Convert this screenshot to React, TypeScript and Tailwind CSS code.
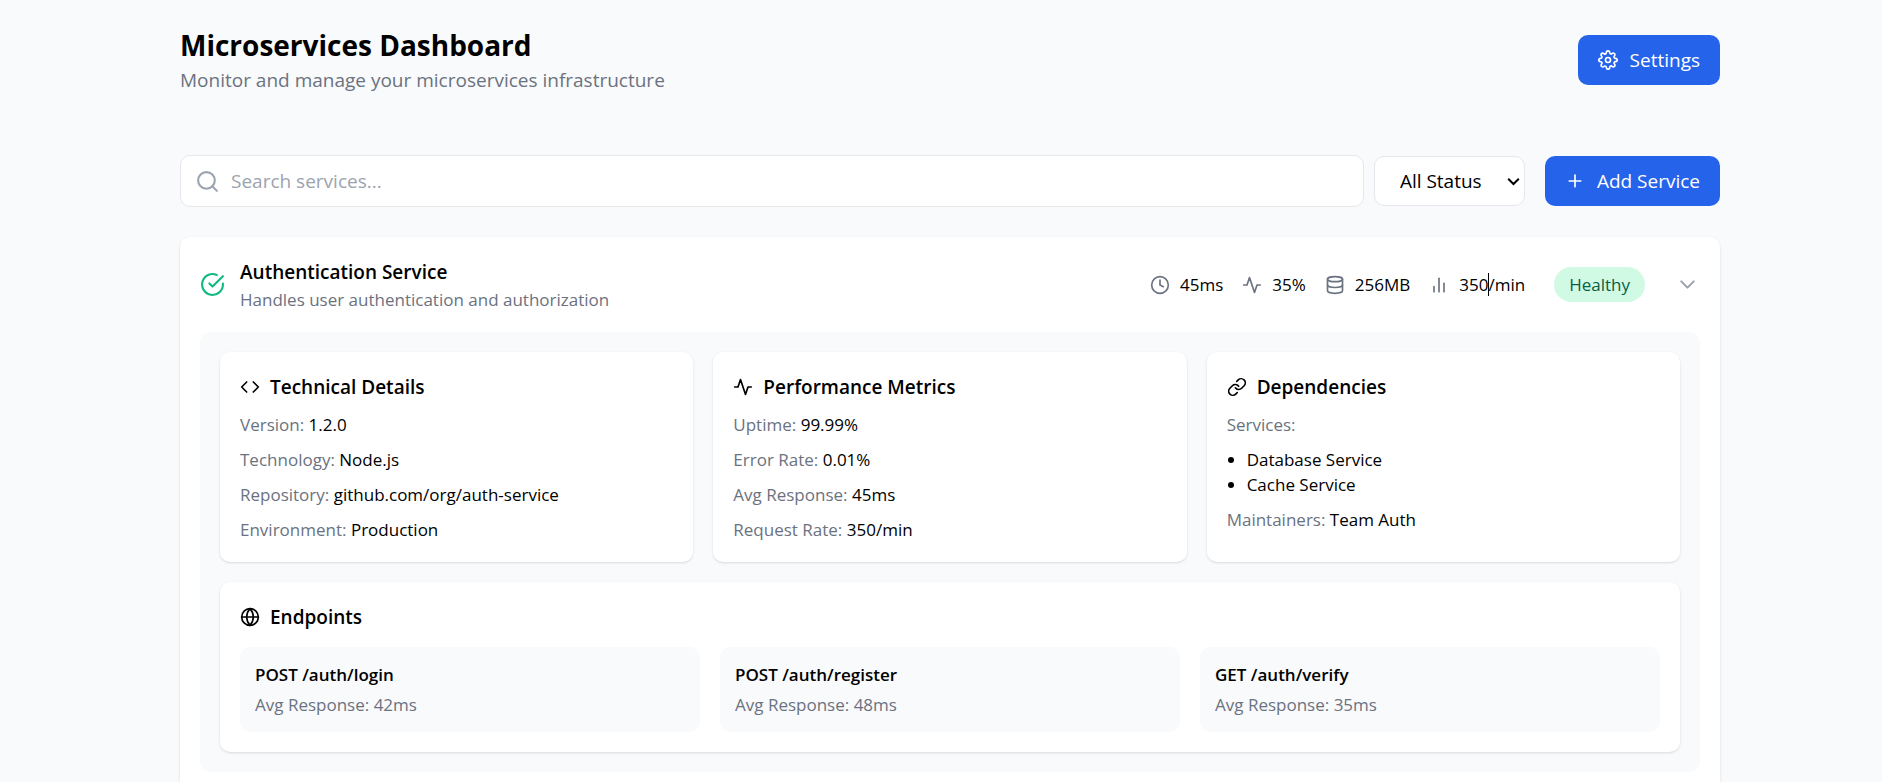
import type { ReactNode } from "react";
import {
  FiActivity,
  FiBarChart2,
  FiCheckCircle,
  FiChevronDown,
  FiClock,
  FiCode,
  FiDatabase,
  FiGlobe,
  FiLink,
  FiPlus,
  FiSearch,
  FiSettings,
} from "react-icons/fi";

const endpoints = [
  { name: "POST /auth/login", response: "42ms" },
  { name: "POST /auth/register", response: "48ms" },
  { name: "GET /auth/verify", response: "35ms" },
];

const technical: [string, string][] = [
  ["Version:", "1.2.0"],
  ["Technology:", "Node.js"],
  ["Repository:", "github.com/org/auth-service"],
  ["Environment:", "Production"],
];

const performance: [string, string][] = [
  ["Uptime:", "99.99%"],
  ["Error Rate:", "0.01%"],
  ["Avg Response:", "45ms"],
  ["Request Rate:", "350/min"],
];

function Row({ label, value }: { label: string; value?: string }) {
  return (
    <p>
      <span className="text-[#6b7280]">{label}</span> {value}
    </p>
  );
}

function Panel({ icon, title, children }: { icon: ReactNode; title: string; children: ReactNode }) {
  return (
    <section className="rounded-[10px] bg-white p-5 shadow-sm">
      <h3 className="flex items-center gap-2.5 text-[19px] leading-[30px] font-semibold">
        {icon}
        {title}
      </h3>
      {children}
    </section>
  );
}

function Metric({ icon, children }: { icon: ReactNode; children: ReactNode }) {
  return (
    <div className="flex items-center gap-2.5">
      <span className="text-[#6b7280]">{icon}</span>
      <span>{children}</span>
    </div>
  );
}

export default function App() {
  return (
    <div className="min-h-screen bg-[#f9fafb] pl-[18px] font-['Open_Sans','Noto_Sans',sans-serif] text-black">
      <div className="mx-auto max-w-[1600px] px-[30px] pt-[25px] pb-[30px]">
        <header className="mb-[60px] flex items-center justify-between">
          <div>
            <h1 className="text-[28px] leading-10 font-bold">Microservices Dashboard</h1>
            <p className="text-[19px] leading-[30px] text-[#6b7280]">
              Monitor and manage your microservices infrastructure
            </p>
          </div>
          <button
            type="button"
            className="flex h-[50px] items-center gap-3 rounded-[10px] bg-[#2563eb] px-5 text-[19px] text-white"
          >
            <FiSettings size={20} />
            Settings
          </button>
        </header>

        <div className="mb-[30px] flex items-center">
          <div className="relative grow">
            <FiSearch size={25} className="absolute top-[14px] left-[15px] text-[#9ca3af]" />
            <input
              type="text"
              aria-label="Search services"
              placeholder="Search services..."
              className="block h-[52px] w-full rounded-[10px] border border-[#e5e7eb] bg-white pr-5 pl-[50px] text-[19px] placeholder:text-[#9ca3af]"
            />
          </div>
          <div className="relative ml-2.5">
            <select
              aria-label="Status"
              className="block h-[50px] w-[151px] appearance-none rounded-[10px] border border-[#e5e7eb] bg-white pl-[25px] text-[19px]"
            >
              <option>All Status</option>
              <option>Healthy</option>
              <option>Warning</option>
              <option>Critical</option>
            </select>
            <svg
              className="pointer-events-none absolute top-[21px] right-[5px]"
              width="13"
              height="9"
              viewBox="0 0 13 9"
              fill="none"
              stroke="black"
              strokeWidth="2"
            >
              <path d="M1.2 1.7 6.5 7l5.3-5.3" />
            </svg>
          </div>
          <button
            type="button"
            className="ml-5 flex h-[50px] items-center gap-3 rounded-[10px] bg-[#2563eb] px-5 text-[19px] text-white"
          >
            <FiPlus size={20} />
            Add Service
          </button>
        </div>

        <article className="rounded-[10px] bg-white p-5 shadow-sm">
          <div className="mb-5 flex items-center justify-between">
            <div className="flex items-center gap-[15px]">
              <FiCheckCircle size={25} className="text-[#10b981]" />
              <div>
                <h2 className="text-[19px] leading-[30px] font-semibold">Authentication Service</h2>
                <p className="text-[17px] leading-[25px] text-[#6b7280]">
                  Handles user authentication and authorization
                </p>
              </div>
            </div>
            <div className="flex items-center text-[17px] leading-[25px]">
              <div className="flex items-center gap-[19px]">
                <Metric icon={<FiClock size={20} />}>45ms</Metric>
                <Metric icon={<FiActivity size={20} />}>35%</Metric>
                <Metric icon={<FiDatabase size={20} />}>256MB</Metric>
                <Metric icon={<FiBarChart2 size={20} />}>
                  350
                  <span className="relative">
                    <span className="absolute top-0 left-0 h-[23px] w-px bg-black" />
                    /min
                  </span>
                </Metric>
              </div>
              <span className="ml-[29px] rounded-full bg-[#d1fae5] px-[15px] py-[5px] text-[#065f46]">
                Healthy
              </span>
              <button type="button" aria-label="Toggle details" className="ml-[30px] text-[#9ca3af]">
                <FiChevronDown size={25} />
              </button>
            </div>
          </div>

          <div className="rounded-[10px] bg-[#f9fafb] p-5">
            <div className="mb-5 grid grid-cols-3 gap-5">
              <Panel icon={<FiCode size={20} />} title="Technical Details">
                <div className="mt-2.5 space-y-2.5 text-[17px] leading-[25px]">
                  {technical.map(([label, value]) => (
                    <Row key={label} label={label} value={value} />
                  ))}
                </div>
              </Panel>
              <Panel icon={<FiActivity size={20} />} title="Performance Metrics">
                <div className="mt-2.5 space-y-2.5 text-[17px] leading-[25px]">
                  {performance.map(([label, value]) => (
                    <Row key={label} label={label} value={value} />
                  ))}
                </div>
              </Panel>
              <Panel icon={<FiLink size={20} />} title="Dependencies">
                <div className="mt-2.5 space-y-2.5 text-[17px] leading-[25px]">
                  <Row label="Services:" />
                  <ul className="list-disc pl-5">
                    <li>Database Service</li>
                    <li>Cache Service</li>
                  </ul>
                  <Row label="Maintainers:" value="Team Auth" />
                </div>
              </Panel>
            </div>
            <Panel icon={<FiGlobe size={20} />} title="Endpoints">
              <div className="mt-[15px] grid grid-cols-3 gap-5 text-[17px] leading-[25px]">
                {endpoints.map((endpoint) => (
                  <div key={endpoint.name} className="rounded-[10px] bg-[#f9fafb] p-[15px]">
                    <p className="font-semibold">{endpoint.name}</p>
                    <p className="mt-[5px] text-[#6b7280]">Avg Response: {endpoint.response}</p>
                  </div>
                ))}
              </div>
            </Panel>
          </div>
        </article>
      </div>
    </div>
  );
}
